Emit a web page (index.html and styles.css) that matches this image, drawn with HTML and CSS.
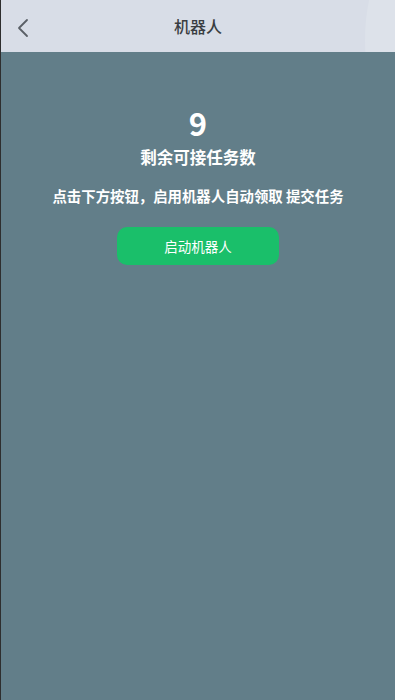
FILE: index.html
```html
<!DOCTYPE html>
<html lang="zh">
<head>
<meta charset="utf-8">
<link rel="stylesheet" href="styles.css">
</head>
<body>
<div class="page">
  <header class="nav">
    <span class="back">
      <svg width="14" height="20" viewBox="0 0 14 20"><path d="M11 2 L3 10 L11 18" fill="none" stroke="#5a5f66" stroke-width="1.8" stroke-linecap="round" stroke-linejoin="round"/></svg>
    </span>
    <h1 class="title">机器人</h1>
  </header>
  <main class="content">
    <div class="count">9</div>
    <div class="label">剩余可接任务数</div>
    <p class="desc">点击下方按钮，启用机器人自动领取 提交任务</p>
    <button class="start">启动机器人</button>
  </main>
</div>
</body>
</html>
```
FILE: styles.css
```css
* { box-sizing: border-box; }
html, body { margin: 0; padding: 0; height: 100%; }
body {
  font-family: "Noto Sans CJK SC", "Noto Sans", sans-serif;
  background: #627e89;
}
.page {
  min-height: 700px;
  border-left: 1px solid #2e2e2e;
  background: #627e89;
  display: flex;
  flex-direction: column;
}
.nav {
  position: relative;
  height: 52px;
  background: #d8dde7;
  display: flex;
  align-items: center;
  justify-content: center;
  overflow: hidden;
}
.nav::after {
  content: "";
  position: absolute;
  right: -90px;
  top: -70px;
  width: 120px;
  height: 220px;
  border-radius: 50%;
  background: #dde2ea;
}
.back {
  position: absolute;
  left: 15px;
  top: 18px;
  display: flex;
}
.title {
  margin: 0;
  font-size: 16px;
  font-weight: 500;
  color: #3a3d42;
  position: relative;
  z-index: 1;
}
.content {
  display: flex;
  flex-direction: column;
  align-items: center;
  padding-top: 53px;
  color: #fff;
}
.count {
  font-size: 31px;
  font-weight: 700;
  line-height: 36px;
}
.label {
  font-size: 16.5px;
  font-weight: 700;
  line-height: 24px;
  margin-top: 4px;
}
.desc {
  margin: 17px 0 0;
  font-size: 14.4px;
  font-weight: 700;
  line-height: 20px;
}
.start {
  margin-top: 21px;
  width: 162px;
  height: 38px;
  border: none;
  border-radius: 10px;
  background: #1abf6a;
  color: #fff;
  font-family: inherit;
  font-size: 13.5px;
  padding: 0;
}
```
